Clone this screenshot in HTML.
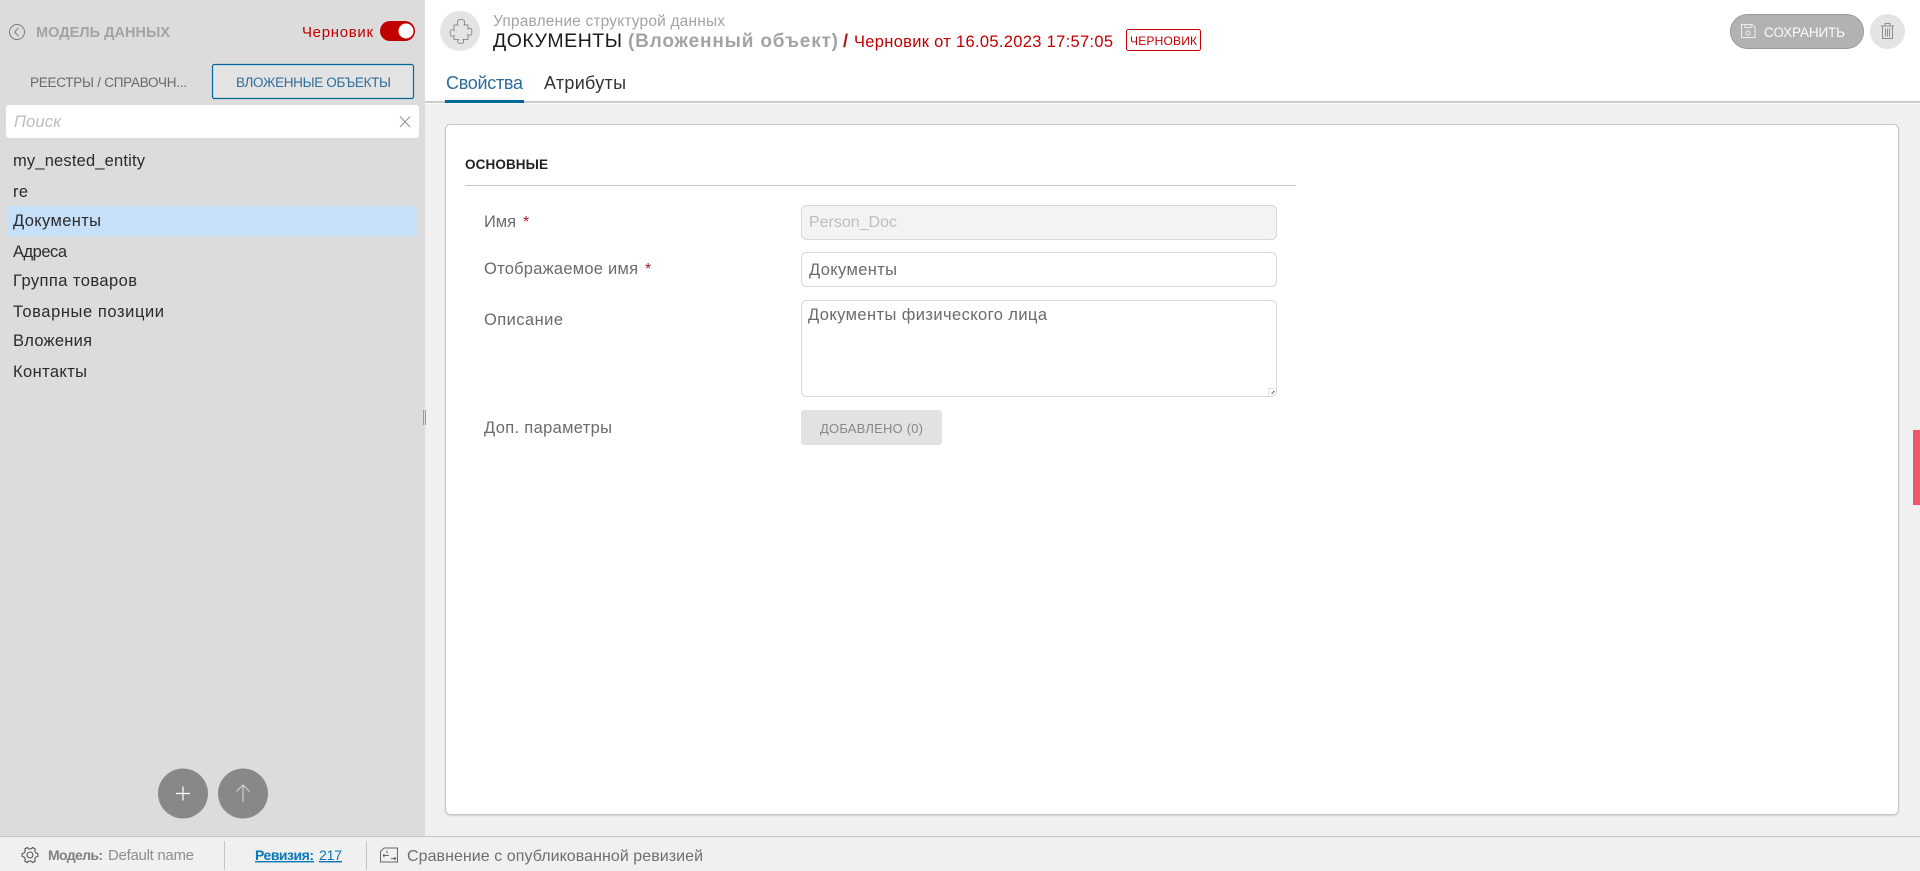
<!DOCTYPE html>
<html lang="ru">
<head>
<meta charset="utf-8">
<title>Модель данных</title>
<style>
html,body{margin:0;padding:0;width:1920px;height:871px;overflow:hidden;background:#fff}
svg{display:block}
text{font-family:"Liberation Sans","DejaVu Sans",sans-serif;white-space:pre}
.l{font-size:16.5px;fill:#2b2b2b}
.f{font-size:16.5px;fill:#6b6b6b}
.ft{font-size:14px;fill:#808080}
</style>
</head>
<body>
<svg width="1920" height="871" viewBox="0 0 1920 871" xmlns="http://www.w3.org/2000/svg">
<defs>
<filter id="cs" x="-2%" y="-2%" width="104%" height="104%"><feDropShadow dx="0" dy="1" stdDeviation=".8" flood-color="#000" flood-opacity=".14"/></filter>
</defs>
<!-- backgrounds -->
<rect x="0" y="0" width="1920" height="871" fill="#fff"/>
<rect x="425" y="103" width="1495" height="733" fill="#f0f0f0"/>
<rect x="0" y="0" width="425" height="836" fill="#dcdcdc"/>
<rect x="425" y="101" width="1495" height="2" fill="#cccccc"/>
<rect x="425" y="103" width="1495" height="1" fill="#fafafa"/>
<rect x="0" y="836" width="1920" height="35" fill="#f0f0f0"/>
<rect x="0" y="836" width="1920" height="1" fill="#c4c4c4"/>

<!-- sidebar header -->
<circle cx="17" cy="32" r="7.5" fill="none" stroke="#7c7c7c" stroke-width="1"/>
<path d="M18.500 28 14.500 32l4 4" fill="none" stroke="#7c7c7c" stroke-width="1"/>
<text x="36" y="37" font-size="14.500" font-weight="700" fill="#a3a3a3" textLength="134">МОДЕЛЬ ДАННЫХ</text>
<text x="302" y="37" font-size="15" fill="#c00000" textLength="71">Черновик</text>
<rect x="380" y="21" width="35" height="20" rx="10" fill="#c00000"/>
<circle cx="406" cy="31" r="7.500" fill="#fff"/>

<text x="30" y="87" font-size="13.500" fill="#6a6a6a" textLength="157">РЕЕСТРЫ / СПРАВОЧН...</text>
<rect x="212.500" y="64.500" width="201" height="34" rx="2" fill="#e3e3e3" stroke="#00679a" stroke-width="1.200"/>
<text x="236" y="87" font-size="13.500" fill="#2f6f9c" textLength="155">ВЛОЖЕННЫЕ ОБЪЕКТЫ</text>

<rect x="6" y="105" width="413" height="33" rx="3" fill="#fff"/>
<text x="14" y="127" font-size="16.500" font-style="italic" fill="#bdbdbd" textLength="47">Поиск</text>
<path d="M400 116.500 410 127M410 116.500 400 127" stroke="#909090" stroke-width="1" fill="none"/>

<!-- list -->
<rect x="8" y="206" width="410" height="30" fill="#c7e0f9"/>
<text class="l" x="13" y="166" textLength="132">my_nested_entity</text>
<text class="l" x="13" y="197" textLength="15">re</text>
<text class="l" x="13" y="226" textLength="88">Документы</text>
<text class="l" x="13" y="257" textLength="54">Адреса</text>
<text class="l" x="13" y="286" textLength="124">Группа товаров</text>
<text class="l" x="13" y="317" textLength="151">Товарные позиции</text>
<text class="l" x="13" y="346" textLength="79">Вложения</text>
<text class="l" x="13" y="377" textLength="74">Контакты</text>

<!-- fab -->
<circle cx="183" cy="793.500" r="25" fill="#888888"/>
<path d="M183 786.500v14M176 793.500h14" stroke="#fff" stroke-width="1.200" fill="none"/>
<circle cx="243" cy="793.500" r="25" fill="#888888"/>
<path d="M243 785v17M236.500 791.500l6.500-6.500 6.500 6.500" stroke="#d8d8d8" stroke-width="1" fill="none"/>

<!-- splitter -->
<rect x="423" y="410" width="1" height="15" fill="#999"/>
<rect x="425" y="410" width="1" height="15" fill="#999"/>

<!-- page header -->
<circle cx="460" cy="31" r="20" fill="#e4e4e4"/>
<path d="M454 25h4c-1-1-1-3 0-4.500 1-1.500 5-1.500 6 0 1 1.500 1 3.500 0 4.500h4v4c1-1 3-1 3.500 0s.5 4.500 0 5.500-2.500 1-3.500 0v5h-5c1 1 1 3 0 3.500s-3.500.5-4.500 0-1-2.500 0-3.500h-4.500v-4c-1 1-3 1-3.500 0s-.5-4 0-5 2.500-1 3.500 0z" fill="none" stroke="#777" stroke-width=".8"/>
<text x="493" y="26" font-size="15.500" fill="#a3a3a3" textLength="232">Управление структурой данных</text>
<text x="493" y="47" font-size="19.500" fill="#1b1b1b" textLength="129">ДОКУМЕНТЫ</text>
<text x="628" y="47" font-size="19" font-weight="700" fill="#a3a3a3" textLength="210">(Вложенный объект)</text>
<text x="843" y="47" font-size="18" font-weight="700" fill="#a81818" textLength="6">/</text>
<text x="854" y="47" font-size="16.500" fill="#c00000" textLength="259">Черновик от 16.05.2023 17:57:05</text>
<rect x="1126.500" y="29.500" width="74" height="21" rx="2" fill="#fff" stroke="#c80000" stroke-width="1"/>
<text x="1130" y="45" font-size="12" fill="#c00000" textLength="67">ЧЕРНОВИК</text>

<!-- tabs -->
<text x="446" y="89" font-size="18" fill="#2a6c9b" textLength="77">Свойства</text>
<text x="544" y="89" font-size="18" fill="#333" textLength="82">Атрибуты</text>
<rect x="445" y="100" width="79" height="3" fill="#00679a"/>

<!-- save -->
<rect x="1730.500" y="14.500" width="133" height="34" rx="17" fill="#b2b2b2" stroke="#9a9a9a"/>
<path d="M1741.500 24.500h10.500l3 3v10h-13.500z" fill="none" stroke="#eee" stroke-width="1"/>
<path d="M1745 24.500v3h6v-3" fill="none" stroke="#eee" stroke-width="1"/>
<circle cx="1748.200" cy="33" r="2" fill="none" stroke="#eee" stroke-width="1"/>
<text x="1764" y="37" font-size="13.500" fill="#fbfbfb" textLength="81">СОХРАНИТЬ</text>
<circle cx="1887.500" cy="31.500" r="17.500" fill="#e4e4e4"/>
<path d="M1881 26h13M1885 26v-2.500h5V26M1882.500 26v12.500h10V26M1885.500 28.500v8M1887.500 28.500v8M1889.500 28.500v8" fill="none" stroke="#8d8d8d" stroke-width="1"/>

<!-- card -->
<rect x="445.500" y="124.500" width="1453" height="690" rx="5" fill="#fff" stroke="#c6c6c6" filter="url(#cs)"/>
<text x="465" y="169" font-size="13.500" font-weight="700" fill="#222" textLength="83">ОСНОВНЫЕ</text>
<rect x="465" y="185" width="831" height="1" fill="#c4c4c4"/>

<!-- form -->
<text class="f" x="484" y="227" textLength="32">Имя</text>
<text x="523" y="227" font-size="16" fill="#a01a2a" textLength="7">*</text>
<text class="f" x="484" y="274" textLength="154">Отображаемое имя</text>
<text x="645" y="274" font-size="16" fill="#a01a2a" textLength="7">*</text>
<text class="f" x="484" y="325" textLength="79">Описание</text>
<text class="f" x="484" y="433" textLength="128">Доп. параметры</text>

<rect x="801.500" y="205.500" width="475" height="34" rx="5" fill="#f3f3f3" stroke="#d8d8d8"/>
<text x="809" y="227" font-size="16" fill="#bdbdbd" textLength="88">Person_Doc</text>
<rect x="801.500" y="252.500" width="475" height="34" rx="5" fill="#fff" stroke="#d8d8d8"/>
<text class="f" x="809" y="275" textLength="88">Документы</text>
<rect x="801.500" y="300.500" width="475" height="96" rx="5" fill="#fff" stroke="#d8d8d8"/>
<text class="f" x="808" y="320" textLength="239">Документы физического лица</text>
<path d="M1268.500 396v-7.500h8.500" fill="none" stroke="#e0e0e0"/>
<path d="M1271.500 392.500h1.500v-1.500h1.500v1.500h-1.500v1.500h-1.500z" fill="#666"/>
<rect x="801" y="410" width="141" height="35" rx="3" fill="#e2e2e2"/>
<text x="820" y="433" font-size="13" fill="#888" textLength="103">ДОБАВЛЕНО (0)</text>

<!-- pink bar -->
<rect x="1913" y="430" width="7" height="75" fill="#f0566a"/>

<!-- footer -->
<path transform="translate(30 855)" d="M5.830-2.120 7.880-1.390 7.880 1.390 5.830 2.120 4.750 3.990 5.140 6.130 2.740 7.520 1.080 6.110-1.080 6.110-2.740 7.520-5.140 6.130-4.750 3.990-5.830 2.120-7.880 1.390-7.880-1.390-5.830-2.120-4.750-3.990-5.140-6.130-2.740-7.520-1.080-6.110 1.080-6.110 2.740-7.520 5.140-6.130 4.750-3.990Z" fill="none" stroke="#555" stroke-width="1.100" stroke-linejoin="round"/>
<circle cx="30" cy="855" r="3" fill="none" stroke="#555" stroke-width="1.100"/>
<text class="ft" x="48" y="860" font-weight="700" textLength="55">Модель:</text>
<text x="108" y="860" font-size="15" fill="#8f8f8f" textLength="86">Default name</text>
<rect x="224" y="841" width="1" height="29" fill="#c4c4c4"/>
<text x="255" y="860" font-size="14" font-weight="700" fill="#0877b8" text-decoration="underline" textLength="59">Ревизия:</text>
<text x="319" y="860" font-size="14" fill="#0877b8" text-decoration="underline" textLength="23">217</text>
<rect x="366" y="841" width="1" height="29" fill="#c4c4c4"/>
<path d="M384 848h13.500v14h-17v-10.500z" fill="none" stroke="#666" stroke-width="1"/>
<path d="M383 855.500h6M391 858.500h5M383 855.500l1.500-1.500M383 855.500l1.500 1.500M396 858.500l-1.500-1.500M396 858.500l-1.500 1.500M387 850.500v3" fill="none" stroke="#666" stroke-width=".9"/>
<text x="407" y="861" font-size="16" fill="#6e6e6e" textLength="296">Сравнение с опубликованной ревизией</text>
</svg>
</body>
</html>
